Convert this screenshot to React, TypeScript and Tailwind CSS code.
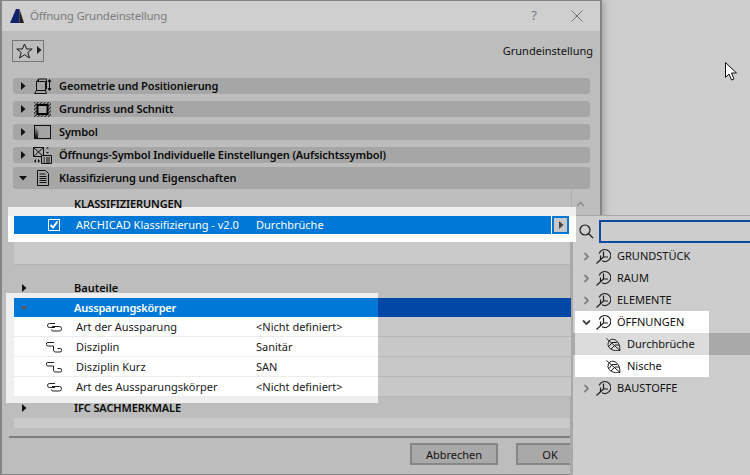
import React from "react";

const Tri = ({ down = false, c = "#111" }: { down?: boolean; c?: string }) => (
  <svg width="8" height="8" viewBox="0 0 8 8" className="shrink-0">
    {down ? <path d="M0 2h8L4 6.5z" fill={c} /> : <path d="M2 0l4.5 4L2 8z" fill={c} />}
  </svg>
);

const IconGeo = () => (
  <svg width="20" height="16" viewBox="0 0 20 16" fill="none" stroke="#111" strokeWidth="1">
    <path d="M3.500 3.500h9v9h-9zM3.500 3.500l2-2.500h8v9l-1 2.500M5.500 1v2.500" />
    <path d="M1.500 15.500l2-3h9l1 3z" />
    <path d="M16.500 2v10M15 3.500l1.500-2 1.500 2zM15 10.500l1.500 2 1.500-2z" fill="#111" />
  </svg>
);
const IconPlan = () => (
  <svg width="17" height="15" viewBox="0 0 17 15">
    <defs>
      <pattern id="hat" width="2.500" height="2.500" patternUnits="userSpaceOnUse" patternTransform="rotate(45)">
        <rect width="2.500" height="2.500" fill="#b0b0b0" />
        <rect width="1.200" height="2.500" fill="#222" />
      </pattern>
    </defs>
    <rect width="17" height="15" fill="url(#hat)" />
    <rect x="3.500" y="3" width="10" height="9" fill="#aaa" stroke="#000" strokeWidth="2" />
  </svg>
);
const IconSym = () => (
  <svg width="17" height="14" viewBox="0 0 17 14">
    <defs>
      <linearGradient id="sy" x1="0" y1="1" x2="1" y2="0">
        <stop offset="0.1" stopColor="#111" />
        <stop offset="0.55" stopColor="#a4a4a4" />
      </linearGradient>
    </defs>
    <rect x="0.500" y="0.500" width="16" height="13" fill="#a4a4a4" stroke="#111" />
    <path d="M1 13V6q0-5 6-5h3q-5 1-6 12z" fill="url(#sy)" />
  </svg>
);
const IconOpen = () => (
  <svg width="19" height="17" viewBox="0 0 19 17" fill="none" stroke="#111" strokeWidth="1">
    <path d="M0.500 0.500h10v9h-10zM0.500 0.500l10 9M10.500 0.500l-10 9" />
    <path d="M13 1.500l1.500-1.500 1.500 1.500zM13 5l1.500 1.500L16 5z" fill="#111" stroke="none" />
    <path d="M8.500 8.500h10v8h-10z" fill="#a4a4a4" />
    <path d="M10.500 11h1.500M13 11h4M10.500 13h1.500M13 13h4M10.500 15h1.500M13 15h4" />
    <path d="M3 12l-2 2 2 2zM5 12l2 2-2 2z" fill="#111" stroke="none" />
  </svg>
);
const IconDoc = () => (
  <svg width="12" height="16" viewBox="0 0 12 16" fill="none" stroke="#111" strokeWidth="1">
    <path d="M0.500 0.500h8l3 3v12h-11z" />
    <path d="M2.500 4h6M2.500 6.500h7M2.500 8.500h7M2.500 10.500h7M2.500 12.500h7" />
  </svg>
);

const Section = ({ icon, label, down = false, tall = false, mt }: { icon: React.ReactNode; label: string; down?: boolean; tall?: boolean; mt: string }) => (
  <div className={`flex items-center rounded-[3px] bg-[#a6a6a6] pl-[6px] ${tall ? "h-[22px]" : "h-[16px]"} ${mt}`}>
    <Tri down={down} />
    <div className="ml-[3px] flex w-[25px] justify-center">{icon}</div>
    <span className="ml-[4px] text-[11px] font-semibold tracking-[-0.01em] text-[#0a0a0a]">{label}</span>
  </div>
);

const LinkA = () => (
  <svg width="15" height="9" viewBox="0 0 15 9" fill="none" stroke="#222" strokeWidth="1">
    <path d="M8 0.500H2.500a2 2 0 0 0 0 4H8" />
    <path d="M5 3.500h7.300a2.100 2.100 0 0 1 0 4.500H6a1.500 1.500 0 0 1-1.500-1.500" />
  </svg>
);
const LinkB = () => (
  <svg width="16" height="11" viewBox="0 0 16 11" fill="none" stroke="#222" strokeWidth="1">
    <path d="M8 0.500H2a1.700 1.700 0 0 0 0 3.500h5.500V7" />
    <path d="M7.500 6.500v1.500a2 2 0 0 0 2 2H14a1.700 1.700 0 0 0 0-3.500h-2.500" />
  </svg>
);

const PropRow = ({ icon, name, value }: { icon: React.ReactNode; name: string; value: string }) => (
  <div className="relative z-10 flex h-[20px]">
    <div className="flex w-[364px] items-center border-b border-[#ececec] bg-white pt-[1px] text-[11px] text-[#1a1a1a]">
      <div className="ml-[32px] flex w-[16px] justify-center">{icon}</div>
      <span className="ml-[14px] w-[180px]">{name}</span>
      <span>{value}</span>
    </div>
    <div className="flex-1 border-b border-[#b6b6b6] bg-[#c8c8c8]" />
  </div>
);

const Tree = () => (
  <svg width="15" height="16" viewBox="0 0 15 16" fill="none" stroke="#1c1c1c" strokeWidth="1.200" className="shrink-0">
    <path d="M3.200 5.500a6 6 0 1 1 2.800 7.300" />
    <path d="M0.500 15.500L7.500 9V3.500M7.500 9h4.500M4.500 11.800V7.500" />
  </svg>
);
const Leaf = () => (
  <svg width="15" height="13" viewBox="0 0 15 13" fill="none" stroke="#1c1c1c" strokeWidth="1" className="shrink-0">
    <path d="M4 2C8-0.500 14 3 14 12.500 8 13.500 2 11 2 6.500 2 4.500 3 3 4 2z" />
    <path d="M0.500 0.500L14 12.500M6 4.500L3 8.500M9 7L5 11M6 4.500h5M9 7h4.500" />
  </svg>
);
const Chev = ({ down = false }: { down?: boolean }) => (
  <svg width="9" height="9" viewBox="0 0 9 9" fill="none" stroke={down ? "#444" : "#808080"} strokeWidth="1.800" className="shrink-0">
    {down ? <path d="M1 2.500l3.500 3.500L8 2.500" /> : <path d="M2.500 1l3.500 3.500L2.500 8" />}
  </svg>
);

const Cat = ({ label, down = false, bg = "" }: { label: string; down?: boolean; bg?: string }) => (
  <div className={`flex h-[22px] w-[134px] items-center pl-[5px] text-[11px] text-[#111] ${bg}`}>
    <div className="flex w-[12px] justify-center"><Chev down={down} /></div>
    <div className="ml-[4px] mr-[6px]"><Tree /></div>
    <span>{label}</span>
  </div>
);

const Sub = ({ label, bg }: { label: string; bg: string }) => (
  <div className={`flex h-[22px] w-[134px] items-center pl-[31px] text-[11px] text-[#111] ${bg}`}>
    <Leaf />
    <span className="ml-[6px]">{label}</span>
  </div>
);

export default function App() {
  return (
    <div className="relative h-[475px] w-[750px] overflow-hidden bg-[#cecece] font-['Noto_Sans',sans-serif]">
      {/* Dialog */}
      <div className="flex h-[475px] w-[602px] flex-col border-x-2 border-y border-[#858585] bg-[#bdbdbd] shadow-[3px_0_6px_rgba(0,0,0,0.18)]">
        <div className="flex h-[30px] shrink-0 items-center bg-[#cfcfcf] pl-[8px]">
          <svg width="15" height="14" viewBox="0 0 15 14">
            <path d="M0 14L6 0h3.500v14z" fill="#12236e" />
            <path d="M9.500 0L14 14H9.500z" fill="#222" />
          </svg>
          <span className="ml-[5px] text-[11.500px] tracking-[-0.02em] text-[#7c7c7c]">Öffnung Grundeinstellung</span>
          <span className="ml-auto text-[13px] text-[#777]">?</span>
          <svg width="12" height="12" viewBox="0 0 12 12" stroke="#6e6e6e" strokeWidth="1" className="ml-[34px] mr-[17px]">
            <path d="M0.500 0.500l11 11M11.500 0.500l-11 11" />
          </svg>
        </div>
        <div className="flex h-[47px] shrink-0 items-start pl-[10px] pr-[7px] pt-[9px]">
          <div className="flex h-[22px] w-[32px] items-center border border-[#767676] pl-[3px]">
            <svg width="17" height="16" viewBox="0 0 17 16" fill="none" stroke="#1a1a1a" strokeWidth="1">
              <path d="M8.500 1l2.200 5h5.500l-4.400 3.400 1.700 5.600-5-3.300-5 3.300 1.700-5.600L0.800 6h5.500z" />
            </svg>
            <div className="ml-[2px] mt-[-3px]"><Tri c="#222" /></div>
          </div>
          <span className="ml-auto mt-[3px] text-[11px] text-[#111]">Grundeinstellung</span>
        </div>
        <div className="shrink-0 pl-[11px] pr-[10px]">
          <Section mt="" icon={<IconGeo />} label="Geometrie und Positionierung" />
          <Section mt="mt-[7px]" icon={<IconPlan />} label="Grundriss und Schnitt" />
          <Section mt="mt-[7px]" icon={<IconSym />} label="Symbol" />
          <Section mt="mt-[7px]" icon={<IconOpen />} label="Öffnungs-Symbol Individuelle Einstellungen (Aufsichtssymbol)" />
          <Section mt="mt-[4px]" tall down icon={<IconDoc />} label="Klassifizierung und Eigenschaften" />
        </div>
        {/* Properties list */}
        <div className="relative h-[247px] shrink-0 pl-[12px] pr-[29px]">
          <div className="absolute right-[15px] top-[12px]">
            <svg width="9" height="6" viewBox="0 0 9 6" fill="none" stroke="#8c8c8c" strokeWidth="1.500"><path d="M1 5l3.500-3.500L8 5" /></svg>
          </div>
          <div className="absolute bottom-0 right-[28px] top-0 w-px bg-[#aeaeae]" />
          <div className="relative z-30 flex h-[26px] items-end pb-[2px] pl-[60px] text-[11px] font-semibold leading-[18px] tracking-[-0.01em] text-[#0a0a0a]">KLASSIFIZIERUNGEN</div>
          <div className="h-[27px]" />
          <div className="h-[22px] bg-[#c9c9c9]" />
          <div className="h-[14px] border-t border-[#b2b2b2]" />
          <div className="flex h-[20px] items-center text-[11px] font-semibold text-[#0a0a0a]">
            <div className="ml-[6px] w-[54px]"><Tri /></div>Bauteile
          </div>
          <div className="absolute left-[4px] top-[104px] h-[110px] w-[372px] bg-[#efefef]" />
          <div className="relative z-10 flex h-[19px]">
            <div className="flex w-[364px] items-center bg-[#0078d7] pt-[1px] text-[11px] font-semibold tracking-[-0.02em] text-white">
              <div className="ml-[6px] w-[54px]"><Tri down c="#4c5d70" /></div>Aussparungskörper
            </div>
            <div className="flex-1 bg-[#0047a6]" />
          </div>
          <PropRow icon={<LinkA />} name="Art der Aussparung" value="<Nicht definiert>" />
          <PropRow icon={<LinkB />} name="Disziplin" value="Sanitär" />
          <PropRow icon={<LinkB />} name="Disziplin Kurz" value="SAN" />
          <PropRow icon={<LinkA />} name="Art des Aussparungskörper" value="<Nicht definiert>" />
          <div className="relative z-10 flex h-[21px] items-center pt-[1px] text-[11px] font-semibold tracking-[-0.01em] text-[#0a0a0a]">
            <div className="ml-[6px] w-[54px]"><Tri /></div>IFC SACHMERKMALE
          </div>
          <div className="h-[10px] bg-[#c9c9c9]" />
        </div>
        {/* Footer */}
        <div className="ml-[7px] flex flex-1 items-start border-t-2 border-[#7d7d7d] pt-[5px]">
          <button className="ml-[401px] h-[22px] w-[88px] border-2 border-[#868686] bg-[#a9a9a9] text-[11px] leading-none text-[#111]">Abbrechen</button>
          <button className="ml-[18px] h-[22px] w-[68px] border-2 border-[#868686] bg-[#a9a9a9] text-[11px] leading-none text-[#111]">OK</button>
        </div>
      </div>

      {/* Classification popover */}
      <div className="absolute bottom-0 left-[570px] right-0 top-[215px] border-l-[3px] border-t border-[#a9a9a9] bg-[#cdcdcd]">
        <div className="flex h-[29px] items-center pl-[5px] pt-[1px]">
          <svg width="15" height="15" viewBox="0 0 15 15" fill="none" stroke="#1a1a1a" strokeWidth="1.200" className="ml-[1px]">
            <circle cx="6" cy="6" r="5" /><path d="M9.500 9.500L14 14" />
          </svg>
          <div className="ml-[5px] h-[23px] flex-1 border-2 border-r-0 border-[#0b4a9e]" />
        </div>
        <div className="pl-[2px]">
          <Cat label="GRUNDSTÜCK" />
          <Cat label="RAUM" />
          <Cat label="ELEMENTE" />
          <Cat label="ÖFFNUNGEN" down bg="bg-white" />
          <div className="ml-[-2px] flex bg-[#a9a9a9] pl-[2px]">
            <Sub label="Durchbrüche" bg="bg-[#dcdcdc]" />
          </div>
          <Sub label="Nische" bg="bg-white" />
          <Cat label="BAUSTOFFE" />
        </div>
      </div>

      {/* Highlighted classification row */}
      <div className="absolute left-[8px] top-[207px] z-20 h-[35px] w-[568px] bg-[#efefef] pt-[9px]">
        <div className="flex h-[18px] bg-white">
          <div className="ml-[6px] flex w-[537px] items-center bg-[#0078d7] text-[11px] text-white">
            <div className="ml-[34px] flex h-[12px] w-[12px] items-center justify-center border border-white">
              <svg width="10" height="10" viewBox="0 0 10 10" fill="none" stroke="#fff" strokeWidth="2"><path d="M1.500 5l2.500 2.500L8.500 1.500" /></svg>
            </div>
            <span className="ml-[16px] w-[180px]">ARCHICAD Klassifizierung - v2.0</span>
            <span>Durchbrüche</span>
          </div>
          <div className="ml-[1px] flex w-[17px] items-center justify-center border-2 border-[#0078d7] bg-[#c8c8c8]">
            <Tri c="#444" />
          </div>
        </div>
        <div className="h-[8px] bg-white" />
      </div>

      {/* Mouse pointer */}
      <svg width="13" height="20" viewBox="0 0 13 20" className="absolute left-[725px] top-[62px]">
        <path d="M0.500 0.500v15l3.500-3.500 2.500 6 2.500-1-2.500-6h5z" fill="#fff" stroke="#111" strokeWidth="1" />
      </svg>
    </div>
  );
}
